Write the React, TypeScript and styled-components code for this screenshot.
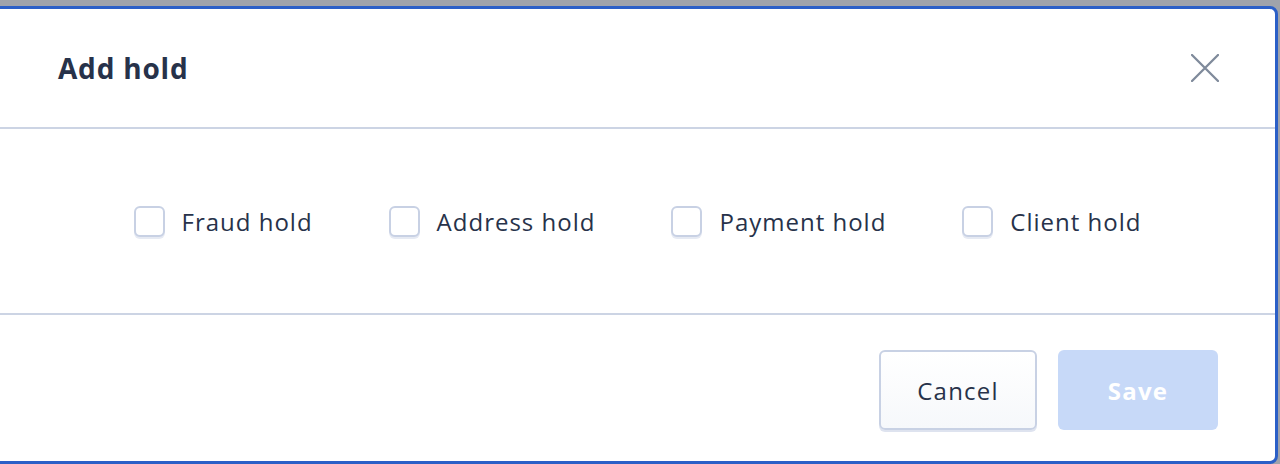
import React from "react";
import styled, { createGlobalStyle } from "styled-components";

const GlobalStyle = createGlobalStyle`
  html, body {
    margin: 0;
    padding: 0;
    height: 100%;
    background: #9fa3ab;
    overflow: hidden;
  }
  * {
    box-sizing: border-box;
  }
`;

const Modal = styled.div`
  margin: 6px 0 0 -3px;
  width: 1281px;
  height: 458px;
  background: #ffffff;
  border: 3px solid #2b5fc7;
  border-radius: 0 8px 8px 0;
  display: flex;
  flex-direction: column;
  font-family: "Open Sans", "Liberation Sans", sans-serif;
  color: #27324a;
`;

const Header = styled.div`
  height: 120px;
  display: flex;
  align-items: center;
  justify-content: space-between;
  padding: 0 55px 0 58px;
  border-bottom: 2px solid #ccd4e4;
`;

const Title = styled.h2`
  margin: 0;
  font-size: 28px;
  font-weight: 700;
  letter-spacing: 0.8px;
  color: #27324a;
`;

const CloseButton = styled.button`
  width: 30px;
  height: 30px;
  padding: 0;
  border: none;
  background: none;
  cursor: pointer;
  display: flex;
  align-items: center;
  justify-content: center;
`;

const Body = styled.div`
  height: 186px;
  display: flex;
  align-items: center;
  justify-content: center;
  gap: 76px;
  border-bottom: 2px solid #ccd4e4;
`;

const Option = styled.label`
  display: flex;
  align-items: center;
  gap: 17px;
  font-size: 24px;
  letter-spacing: 1px;
  color: #27324a;
  cursor: pointer;
`;

const Box = styled.span`
  width: 31px;
  height: 31px;
  border: 2px solid #c8d1e4;
  border-radius: 6px;
  background: #ffffff;
  box-shadow: 0 2px 0 rgba(200, 209, 228, 0.45);
`;

const Footer = styled.div`
  flex: 1;
  display: flex;
  align-items: flex-start;
  justify-content: flex-end;
  gap: 21px;
  padding: 35px 57px 0 0;
`;

const Button = styled.button<{ $primary?: boolean }>`
  height: 80px;
  padding: 0;
  border-radius: 6px;
  font-family: inherit;
  font-size: 24px;
  letter-spacing: 1.2px;
  cursor: pointer;
  border: ${(p) => (p.$primary ? "none" : "2px solid #c8d1e4")};
  background: ${(p) =>
    p.$primary ? "#c7d9f8" : "linear-gradient(#ffffff, #f6f8fb)"};
  color: ${(p) => (p.$primary ? "#ffffff" : "#27324a")};
  font-weight: ${(p) => (p.$primary ? 700 : 400)};
  box-shadow: ${(p) => (p.$primary ? "none" : "0 2px 0 rgba(200, 209, 228, 0.6)")};
  width: ${(p) => (p.$primary ? "160px" : "158px")};
`;

const holds = ["Fraud hold", "Address hold", "Payment hold", "Client hold"];

const App = () => {
  return (
    <>
      <GlobalStyle />
      <Modal>
        <Header>
          <Title>Add hold</Title>
          <CloseButton aria-label="Close">
            <svg width="28" height="28" viewBox="0 0 28 28">
              <path
                d="M1 1 L27 27 M27 1 L1 27"
                stroke="#7f8a9b"
                strokeWidth="2.3"
                strokeLinecap="round"
              />
            </svg>
          </CloseButton>
        </Header>
        <Body>
          {holds.map((h) => (
            <Option key={h}>
              <Box />
              {h}
            </Option>
          ))}
        </Body>
        <Footer>
          <Button>Cancel</Button>
          <Button $primary>Save</Button>
        </Footer>
      </Modal>
    </>
  );
};

export default App;
